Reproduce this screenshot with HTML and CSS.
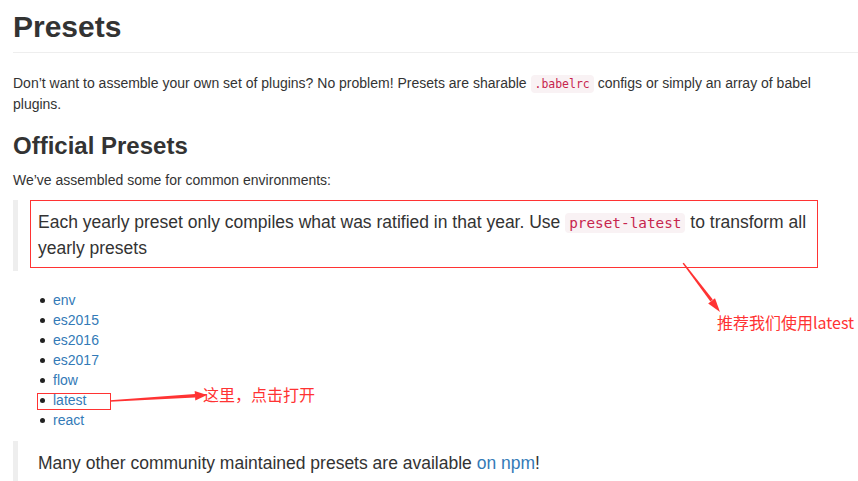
FILE: index.html
```html
<!DOCTYPE html>
<html lang="en">
<head>
    <meta charset="UTF-8">
    <meta name="viewport" content="width=device-width, initial-scale=1.0">
    <title>Presets</title>
    <link rel="stylesheet" href="styles.css">
</head>
<body>

    <div class="docs">
        <!-- Page header -->
        <h1 class="page-header">Presets</h1>
        <p>Don’t want to assemble your own set of plugins? No problem! Presets are sharable <code>.babelrc</code> configs or simply an array of babel plugins.</p>

        <h3>Official Presets</h3>
        <p>We’ve assembled some for common environments:</p>

        <blockquote>
            <p>Each yearly preset only compiles what was ratified in that year. Use <code>preset-latest</code> to transform all yearly presets</p>
        </blockquote>

        <ul class="preset-list">
            <li><a href="#">env</a></li>
            <li><a href="#">es2015</a></li>
            <li><a href="#">es2016</a></li>
            <li><a href="#">es2017</a></li>
            <li><a href="#">flow</a></li>
            <li><a href="#">latest</a></li>
            <li><a href="#">react</a></li>
        </ul>

        <blockquote>
            <p>Many other community maintained presets are available <a href="#">on npm</a>!</p>
        </blockquote>
    </div>

    <!-- Annotations drawn over the page -->
    <div class="mark mark-quote"></div>
    <div class="mark mark-latest"></div>
    <svg class="arrows" width="858" height="481" viewBox="0 0 858 481">
        <polygon points="110,400.3 110,401.7 195,397.4 195,394" fill="#ff3333"/>
        <polygon points="207,395 195.3,400.4 194.7,391" fill="#ff3333"/>
        <polygon points="682.6,263.6 683.8,262.8 712.8,299.6 710.4,301.4" fill="#ff3333"/>
        <polygon points="720,312 708.2,303.4 715,298.2" fill="#ff3333"/>
    </svg>
    <span class="note note-open">这里，点击打开</span>
    <span class="note note-latest">推荐我们使用latest</span>

</body>
</html>
```

FILE: styles.css
```css
/* General Styles */
body {
    margin: 0;
    padding: 0;
    font-family: "Liberation Sans", Arial, sans-serif;
    font-size: 14px;
    line-height: 20px;
    color: #333;
    background: #fff;
    overflow: hidden;
}

.docs {
    padding: 0 0 0 13px;
}

a {
    color: #337ab7;
    text-decoration: none;
}

p {
    margin: 0 0 10px;
}

.page-header {
    font-size: 30px;
    font-weight: bold;
    line-height: 1.1;
    margin: 10px 0 20px;
    padding-bottom: 9px;
    border-bottom: 1px solid #eee;
}

h3 {
    font-size: 24px;
    font-weight: bold;
    line-height: 1.1;
    margin: 19px 0 11px;
}

code {
    font-family: "DejaVu Sans Mono", monospace;
    font-size: 0.82em;
    padding: 2px 4px;
    color: #c7254e;
    background-color: #f9f2f4;
    border-radius: 4px;
}

blockquote {
    margin: 0 0 20px;
    padding: 10px 20px;
    border-left: 5px solid #eee;
    font-size: 17.5px;
    line-height: 25px;
}

blockquote p {
    margin: 0;
}

.preset-list {
    list-style: none;
    margin: -1px 0 11px;
    padding-left: 27px;
}

.preset-list li::before {
    content: "";
    display: inline-block;
    width: 5px;
    height: 5px;
    margin: 0 8px 2px 0;
    border-radius: 50%;
    background: #222;
    vertical-align: middle;
}

/* Annotations */
.mark {
    position: absolute;
    border: 1px solid #ff3333;
}

.mark-quote {
    left: 30px;
    top: 200px;
    width: 786px;
    height: 66px;
}

.mark-latest {
    left: 37px;
    top: 393px;
    width: 72px;
    height: 15px;
}

.arrows {
    position: absolute;
    left: 0;
    top: 0;
    pointer-events: none;
}

.note {
    position: absolute;
    color: #ff3333;
    font-family: "Noto Sans CJK SC", "Liberation Sans", sans-serif;
    font-size: 16px;
    line-height: 16px;
    white-space: nowrap;
}

.note-open {
    left: 203px;
    top: 386px;
}

.note-latest {
    left: 717px;
    top: 314px;
}
```
